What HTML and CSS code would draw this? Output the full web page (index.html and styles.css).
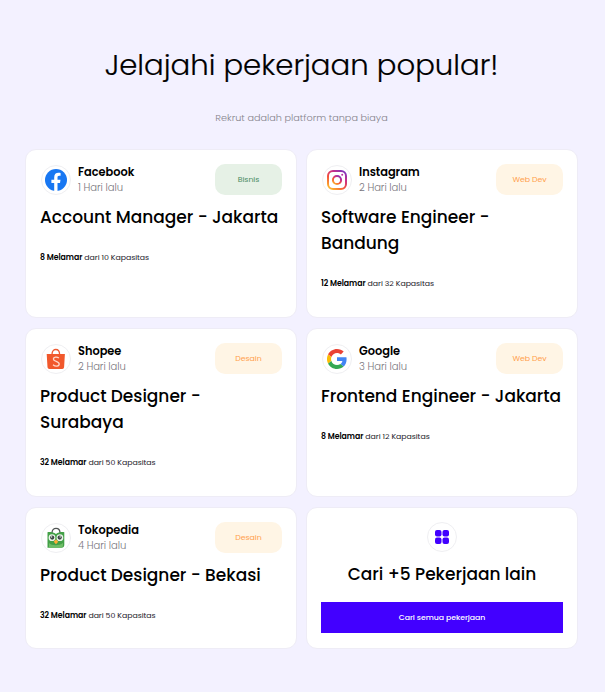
FILE: index.html
```html
<!DOCTYPE html>
<html lang="id">
<head>
<meta charset="utf-8">
<title>Rekrut</title>
<link rel="stylesheet" href="styles.css">
</head>
<body>
<main class="jobs">
  <h1 class="heading">Jelajahi pekerjaan popular!</h1>
  <p class="subheading">Rekrut adalah platform tanpa biaya</p>
  <section class="grid">
    <article class="card">
      <header class="top">
        <div class="logo"><svg viewBox="0 0 24 24" width="24" height="24"><circle cx="12" cy="12" r="11" fill="#1877f2"/><path d="M10.200 23v-8H7.400v-3.300h2.800V9.200c0-2.900 1.700-4.400 4.200-4.400 1 0 2.200.2 2.200.2v2.700h-1.400c-1.300 0-1.700.8-1.700 1.600v2.400h3l-.5 3.300h-2.500v8z" fill="#fff"/></svg></div>
        <div class="who"><h2 class="company">Facebook</h2><p class="time">1 Hari lalu</p></div>
        <span class="badge green">Bisnis</span>
      </header>
      <h3 class="title">Account Manager - Jakarta</h3>
      <p class="meta"><b>8 Melamar</b> dari 10 Kapasitas</p>
    </article>
    <article class="card">
      <header class="top">
        <div class="logo"><svg viewBox="0 0 24 24" width="24" height="24"><defs><linearGradient id="ig" x1=".15" y1="1" x2=".85" y2="0"><stop offset="0" stop-color="#fdb62d"/><stop offset=".4" stop-color="#f3513c"/><stop offset=".7" stop-color="#cc2f83"/><stop offset="1" stop-color="#8134bd"/></linearGradient></defs><rect x="3" y="3" width="18" height="18" rx="5" fill="none" stroke="url(#ig)" stroke-width="2"/><circle cx="12" cy="12" r="4.100" fill="none" stroke="url(#ig)" stroke-width="2"/><circle cx="17.200" cy="6.800" r="1" fill="#b832a0"/></svg></div>
        <div class="who"><h2 class="company">Instagram</h2><p class="time">2 Hari lalu</p></div>
        <span class="badge orange">Web Dev</span>
      </header>
      <h3 class="title">Software Engineer -<br>Bandung</h3>
      <p class="meta"><b>12 Melamar</b> dari 32 Kapasitas</p>
    </article>
    <article class="card">
      <header class="top">
        <div class="logo"><svg viewBox="0 0 24 24" width="24" height="24"><path d="M8 7.500C8 .8 15.600 .8 15.600 7.500" fill="none" stroke="#ee5a32" stroke-width="1.300"/><path d="M2.700 7h18.200l-.8 13.200q-.1 1.800-1.900 1.800H5.400q-1.800 0-1.900-1.800z" fill="#f1582c"/><path d="M14.900 11.100c-1.700-1.500-5.500-1.400-5.500.9 0 2.900 5.800 1.900 5.800 5 0 2.500-3.900 2.700-6.200.7" fill="none" stroke="#ffd9cc" stroke-width="1.300"/></svg></div>
        <div class="who"><h2 class="company">Shopee</h2><p class="time">2 Hari lalu</p></div>
        <span class="badge orange">Desain</span>
      </header>
      <h3 class="title">Product Designer -<br>Surabaya</h3>
      <p class="meta"><b>32 Melamar</b> dari 50 Kapasitas</p>
    </article>
    <article class="card">
      <header class="top">
        <div class="logo"><svg viewBox="0 0 48 48" width="20" height="20"><path fill="#ea4335" d="M24 9.500c3.540 0 6.710 1.220 9.210 3.600l6.850-6.850C35.900 2.380 30.470 0 24 0 14.620 0 6.510 5.380 2.560 13.220l7.980 6.190C12.430 13.720 17.740 9.500 24 9.500z"/><path fill="#4285f4" d="M46.980 24.550c0-1.570-.15-3.090-.38-4.550H24v9.020h12.940c-.58 2.960-2.260 5.480-4.780 7.180l7.730 6c4.510-4.180 7.090-10.360 7.090-17.650z"/><path fill="#fbbc05" d="M10.530 28.590a14.500 14.500 0 0 1 0-9.180l-7.980-6.190a24 24 0 0 0 0 21.560z"/><path fill="#34a853" d="M24 48c6.480 0 11.930-2.130 15.890-5.810l-7.730-6c-2.150 1.450-4.920 2.300-8.160 2.300-6.260 0-11.570-4.220-13.470-9.910l-7.980 6.190C6.510 42.620 14.620 48 24 48z"/></svg></div>
        <div class="who"><h2 class="company">Google</h2><p class="time">3 Hari lalu</p></div>
        <span class="badge orange">Web Dev</span>
      </header>
      <h3 class="title">Frontend Engineer - Jakarta</h3>
      <p class="meta"><b>8 Melamar</b> dari 12 Kapasitas</p>
    </article>
    <article class="card">
      <header class="top">
        <div class="logo"><svg viewBox="0 0 24 24" width="24" height="24"><path d="M8 7C8 .7 16 .7 16 7" fill="none" stroke="#505554" stroke-width="1.300"/><path d="M3.500 6.200c3.500-.3 6 .2 8.500 1.700 2.300-1.400 4.700-2 8.300-1.700v12.500q0 3-3 3H3.500z" fill="#43a047"/><path d="M5 17c3 3 10 3 14 0v2.500q0 2.200-2.200 2.200H5z" fill="#6fbd67"/><circle cx="8" cy="11.700" r="3.400" fill="#e9f3e9"/><circle cx="15.900" cy="11.700" r="3.400" fill="#e9f3e9"/><circle cx="8.200" cy="11.600" r="2.100" fill="#3c4543"/><circle cx="15.700" cy="11.600" r="2.100" fill="#3c4543"/><circle cx="7.600" cy="10.900" r=".7" fill="#fff"/><circle cx="16.200" cy="10.900" r=".7" fill="#fff"/><path d="M12 13.200l2.200 2.600-2.200 2.500-2.200-2.500z" fill="#ffad35"/></svg></div>
        <div class="who"><h2 class="company">Tokopedia</h2><p class="time">4 Hari lalu</p></div>
        <span class="badge orange">Desain</span>
      </header>
      <h3 class="title">Product Designer - Bekasi</h3>
      <p class="meta"><b>32 Melamar</b> dari 50 Kapasitas</p>
    </article>
    <article class="card more">
      <div class="logo"><svg viewBox="0 0 14 14" width="14" height="14" fill="#4200ff"><rect width="6.500" height="6.500" rx="2"/><rect x="7.500" width="6.500" height="6.500" rx="2"/><rect y="7.500" width="6.500" height="6.500" rx="2"/><rect x="7.500" y="7.500" width="6.500" height="6.500" rx="2"/></svg></div>
      <h3 class="title">Cari +5 Pekerjaan lain</h3>
      <button class="button">Cari semua pekerjaan</button>
    </article>
  </section>
</main>
</body>
</html>
```
FILE: styles.css
```css
* { box-sizing: border-box; }
body {
  margin: 0;
  background: #f3f1ff;
  color: #000;
  font-family: Poppins, Inter, sans-serif;
}
h1, h2, h3, p { margin: 0; }
.jobs { min-height: 692px; padding: 42px 27px 44px 25px; }
.heading {
  font-size: 29.2px;
  line-height: 46px;
  font-weight: 300;
  -webkit-text-stroke: 0.2px #000;
  text-align: center;
  white-space: nowrap;
}
.subheading {
  margin-top: 20px;
  font-size: 9.7px;
  line-height: 20px;
  font-weight: 300;
  color: #85838c;
  text-align: center;
}
.grid {
  display: grid;
  grid-template-columns: 272px 272px;
  grid-template-rows: 169px 169px 142px;
  gap: 10px 9px;
  margin-top: 21px;
}
.card {
  padding: 14px;
  border: 1px solid #eeecf6;
  border-radius: 11px;
  background: #fff;
}
.top { display: flex; height: 31px; align-items: center; }
.logo {
  display: flex;
  flex: none;
  align-items: center;
  justify-content: center;
  width: 30px;
  height: 30px;
  border: 1px solid #efeff2;
  border-radius: 50%;
}
.top .logo { margin-left: 1px; }
.who { margin-left: 7px; }
.company { font-size: 11.4px; line-height: 16px; font-weight: 600; letter-spacing: -0.03px; }
.time { font-size: 10px; line-height: 15px; font-weight: 300; letter-spacing: -0.04px; color: #77757c; }
.badge {
  width: 67px;
  height: 31px;
  margin-left: auto;
  border-radius: 10px;
  font-size: 7.8px;
  line-height: 31px;
  letter-spacing: -0.04px;
  text-align: center;
}
.green { background: #e6f1e6; color: #4a8b62; }
.orange { background: #fff5e5; color: #ff9f4d; }
.title {
  margin-top: 9px;
  font-size: 17px;
  line-height: 26px;
  font-weight: 500;
  letter-spacing: -0.02px;
  white-space: nowrap;
}
.meta { margin-top: 22px; font-size: 7.8px; line-height: 12px; letter-spacing: -0.05px; color: #24222b; }
.meta b { font-weight: 600; color: #000; }
.more { display: flex; flex-direction: column; align-items: center; }
.button {
  width: 100%;
  height: 31px;
  margin-top: 15px;
  padding: 0;
  border: 0;
  background: #4200ff;
  color: #fff;
  font: 500 7.8px/31px Poppins, Inter, sans-serif;
  letter-spacing: -0.06px;
}
```
